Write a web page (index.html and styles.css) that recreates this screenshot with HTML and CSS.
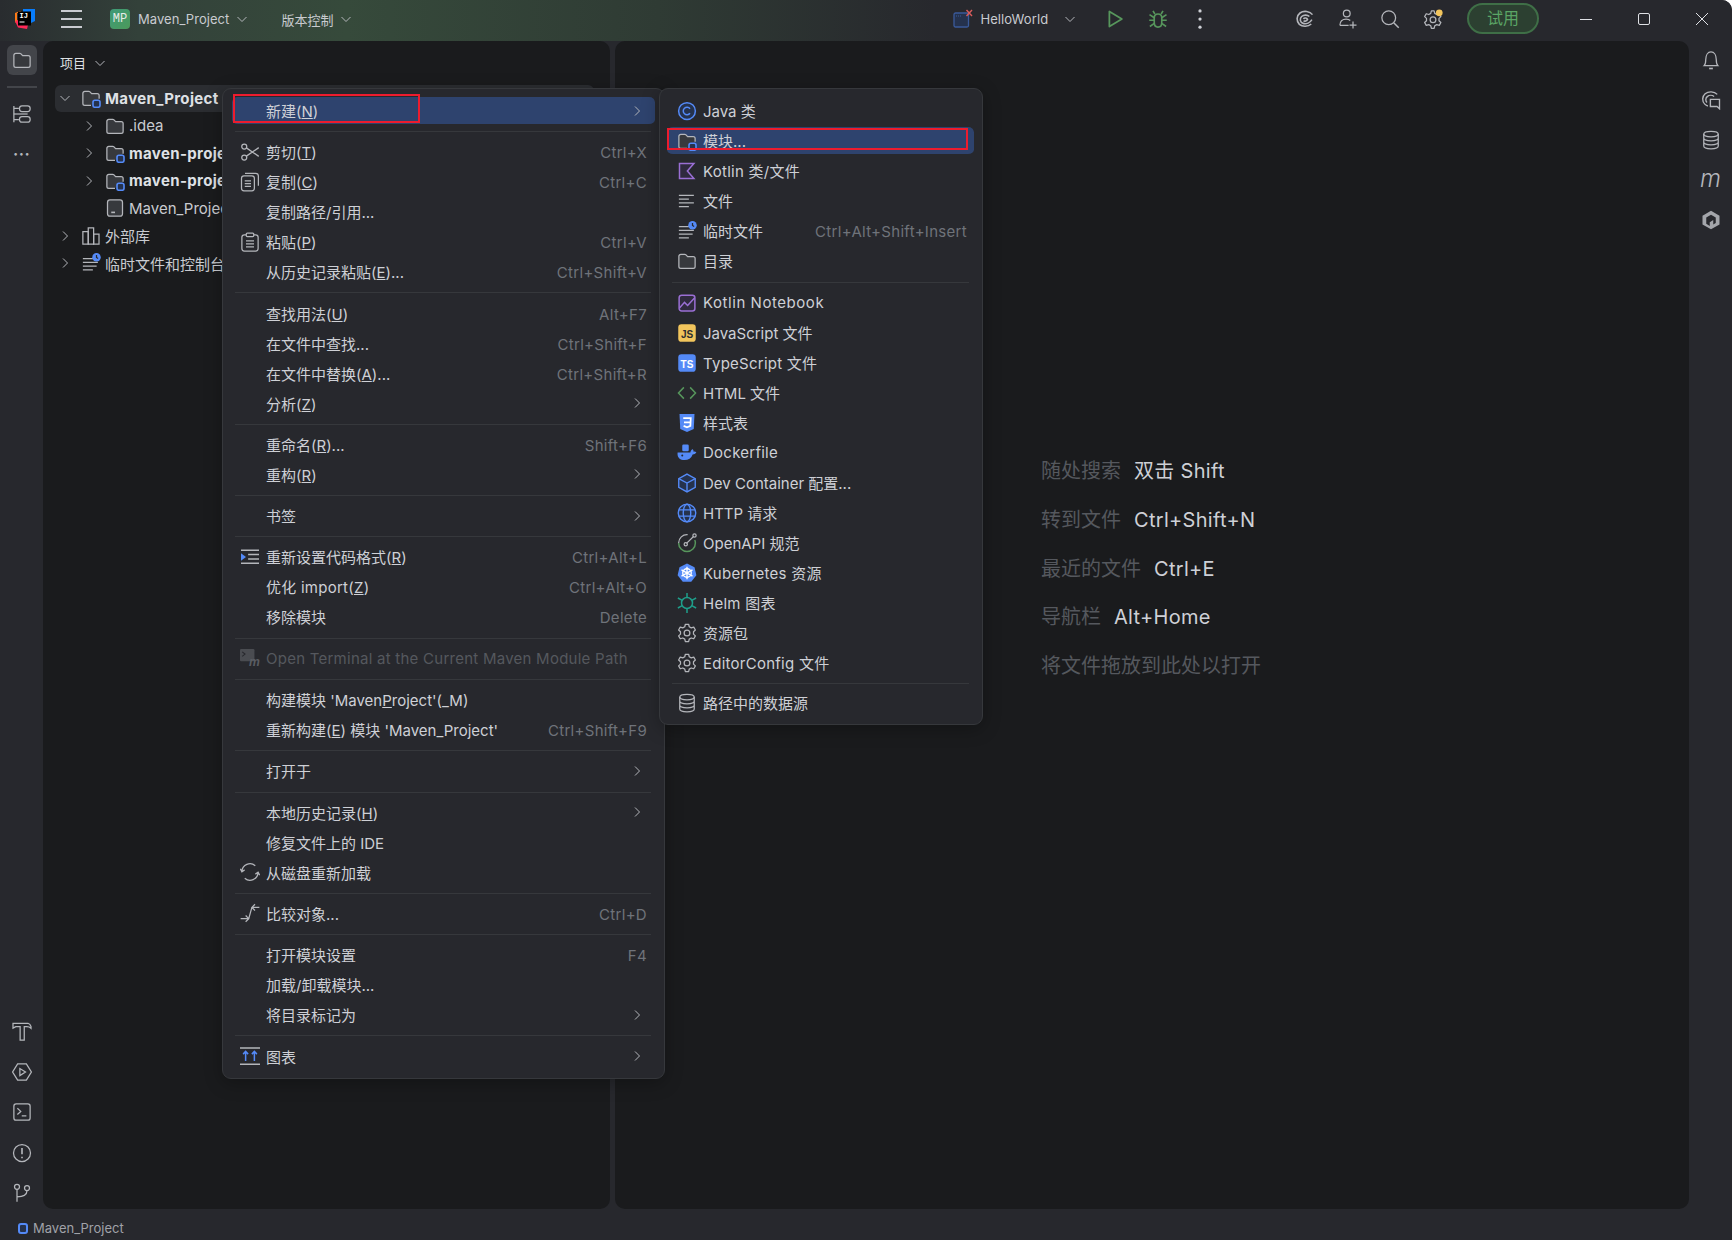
FILE: index.html
```html
<!DOCTYPE html>
<html lang="zh-CN">
<head>
    <meta charset="UTF-8">
    <title>Maven_Project - IntelliJ IDEA</title>
    <link rel="stylesheet" href="styles.css">
</head>
<body>
    <!-- icon sprite -->
    <svg class="sprite" xmlns="http://www.w3.org/2000/svg">
        <symbol id="i-folder" viewBox="0 0 16 16"><path fill="#37393d" d="M1.5 4.2c0-.8.7-1.5 1.5-1.5h3.2c.4 0 .7.1 1 .4l1.3 1.4H13c.8 0 1.5.7 1.5 1.5v6.3c0 .8-.7 1.5-1.5 1.5H3c-.8 0-1.500-.7-1.500-1.500z"/></symbol>
        <symbol id="i-module" viewBox="0 0 16 16"><path fill="#37393d" d="M8 13.8H3c-.8 0-1.5-.7-1.5-1.5V4.2c0-.8.7-1.5 1.5-1.5h3.2c.4 0 .7.1 1 .4l1.3 1.4H13c.8 0 1.5.7 1.5 1.5v2.5"/><rect x="9.6" y="9.8" width="5.6" height="5.6" rx="1.5" fill="#25324d" stroke="#548af7" stroke-width="1.3"/></symbol>
        <symbol id="i-class" viewBox="0 0 16 16"><circle cx="8" cy="8" r="6.7" fill="#25324d" stroke="#548af7" stroke-width="1.2"/><path stroke="#548af7" stroke-width="1.2" d="M10.4 6.2a3 3 0 1 0 0 3.6"/></symbol>
        <symbol id="i-kotlin" viewBox="0 0 16 16"><path fill="#2f2a3e" stroke="#9a6fd4" stroke-width="1.2" d="M2 2h11.5L8.3 8l5.2 6H2z"/></symbol>
        <symbol id="i-lines" viewBox="0 0 16 16"><path d="M1.5 3.5h12M1.5 6.5h8M1.5 9.5h12M1.5 12.5h8"/></symbol>
        <symbol id="i-scratch" viewBox="0 0 16 16"><path d="M1.5 4.5h8M1.5 7.5h12M1.5 10.5h11M1.5 13.5h8"/><circle cx="12.4" cy="3.4" r="3.4" fill="#548af7" stroke="none"/><path stroke="#27282d" d="M12.4 1.6v2l1.3.8"/></symbol>
        <symbol id="i-notebook" viewBox="0 0 16 16"><rect x="1.7" y="1.7" width="12.6" height="12.6" rx="2" fill="#2f2a3e" stroke="#9a6fd4" stroke-width="1.2"/><path stroke="#9a6fd4" stroke-width="1.2" d="M2 12 6 7.5l2.5 2.5L14 4"/></symbol>
        <symbol id="i-js" viewBox="0 0 16 16"><rect x="1" y="1" width="14" height="14" rx="2.5" fill="#f2c55c" stroke="none"/><text class="badge-text" x="8" y="12" fill="#2b2d30">JS</text></symbol>
        <symbol id="i-ts" viewBox="0 0 16 16"><rect x="1" y="1" width="14" height="14" rx="2.5" fill="#548af7" stroke="none"/><text class="badge-text" x="8" y="12" fill="#fff">TS</text></symbol>
        <symbol id="i-css" viewBox="0 0 16 16"><path fill="#548af7" stroke="none" d="M2 .8h12l-.6 12L8 15.2l-5.4-2.4z"/><path stroke="#fff" stroke-width="1.4" d="M5 4h6l-.3 6.3L8 11.4l-2.7-1.1M5.6 7.4h5"/></symbol>
        <symbol id="i-html" viewBox="0 0 16 16"><path stroke="#57965c" stroke-width="1.2" d="M5.5 3.5 1.2 8l4.3 4.5M10.5 3.5 14.8 8l-4.3 4.5"/></symbol>
        <symbol id="i-docker" viewBox="0 0 16 16"><rect x="4.2" y="1.2" width="5.2" height="5.4" rx="1" fill="#548af7" stroke="none"/><path fill="#548af7" stroke="none" d="M.5 7.6h10.2c.2-1.5 1-2.5 2-2.7.4.7.6 1.4.5 2 .8-.2 1.7 0 2.3.5-.7 1.2-1.8 1.7-3 1.7-1 3-3.4 4.5-6.5 4.5-3.4 0-5.6-2-5.6-5.1z"/><circle cx="4.2" cy="10" r=".8" fill="#27282d" stroke="none"/></symbol>
        <symbol id="i-cube" viewBox="0 0 16 16"><path fill="#25324d" stroke="#548af7" stroke-width="1.1" d="M8 .9 14.6 4.5v7L8 15.1 1.4 11.5v-7z"/><path stroke="#548af7" stroke-width="1.1" d="M1.4 4.5 8 8l6.6-3.5M8 8v7"/></symbol>
        <symbol id="i-globe" viewBox="0 0 16 16"><g stroke="#548af7" stroke-width="1.1"><circle cx="8" cy="8" r="7" fill="#25324d"/><ellipse cx="8" cy="8" rx="3" ry="7"/><path d="M1.5 5.5h13M1.5 10.5h13"/></g></symbol>
        <symbol id="i-openapi" viewBox="0 0 16 16"><path stroke="#b4b6bb" d="M8.5 1.3A6.7 6.7 0 0 0 1.3 8"/><path stroke="#57965c" stroke-width="1.2" d="M1.3 8a6.7 6.7 0 0 0 13.4 0c0-.9-.2-1.7-.5-2.4"/><path d="M7.6 8.3 13.2 2.8"/><circle cx="7" cy="9" r="1.3"/><circle cx="14" cy="2" r="1.3"/></symbol>
        <symbol id="i-k8s" viewBox="0 0 16 16"><path fill="#548af7" stroke="none" d="M8 .4 14 3.3l1.5 6.4-4.1 5.2H4.6L.5 9.7 2 3.3z"/><g stroke="#fff" stroke-width="1.1"><circle cx="8" cy="8" r="3.4"/><path d="M8 3v10M3.6 5.5l8.8 5M12.4 5.5l-8.8 5"/></g></symbol>
        <symbol id="i-helm" viewBox="0 0 16 16"><g stroke="#1f9e8a" stroke-width="1.2"><circle cx="8" cy="8" r="4.4"/><path d="M8 0v3.6M8 12.4V16M.7 4l3.5 1.9M11.8 10.1 15.3 12M15.3 4l-3.5 1.9M4.2 10.1.7 12"/></g></symbol>
        <symbol id="i-gear" viewBox="0 0 16 16"><path stroke-linejoin="round" d="M6.7 1h2.6l.5 2 1.6.9 2-.6 1.3 2.3-1.5 1.4v1.9l1.5 1.4-1.3 2.3-2-.6-1.6.9-.5 2H6.7l-.5-2-1.6-.9-2 .6-1.3-2.3 1.5-1.4V7l-1.5-1.4 1.3-2.3 2 .6 1.6-.9z"/><circle cx="8" cy="8" r="2.3"/></symbol>
        <symbol id="i-db" viewBox="0 0 16 16"><ellipse cx="8" cy="3.2" rx="5.8" ry="2.2"/><path d="M2.2 3.2v9.6c0 1.2 2.6 2.2 5.8 2.2s5.8-1 5.8-2.2V3.2M2.2 6.4c0 1.2 2.6 2.2 5.8 2.2s5.8-1 5.8-2.2M2.2 9.6c0 1.2 2.6 2.2 5.8 2.2s5.8-1 5.8-2.2"/></symbol>
        <symbol id="i-scissors" viewBox="0 0 16 16"><circle cx="3.4" cy="3.6" r="2"/><circle cx="3.4" cy="12.4" r="2"/><path d="M5.1 4.7 15 11.5M5.1 11.3 15 4.5"/></symbol>
        <symbol id="i-copy" viewBox="0 0 16 16"><rect x="1.2" y="3" width="10.3" height="12" rx="2"/><path d="M4 1h8.5c1.2 0 2.2 1 2.2 2.2V11M3.8 7h5M3.8 9.2h5M3.8 11.4h5"/></symbol>
        <symbol id="i-paste" viewBox="0 0 16 16"><rect x="1.5" y="2.2" width="13" height="13" rx="2"/><rect x="5" y=".8" width="6" height="2.8" rx=".8" fill="#27282d"/><path d="M4.8 7h6.4M4.8 9.4h6.4M4.8 11.8h6.4"/></symbol>
        <symbol id="i-reformat" viewBox="0 0 16 16"><path stroke-width="1.2" d="M.8 2.5h14.4M6.5 6h8.7M6.5 9.5h8.7M.8 13h14.4"/><path fill="#548af7" stroke="none" d="M.8 5 4.8 8l-4 3z"/></symbol>
        <symbol id="i-termm" viewBox="0 0 18 18"><rect x="0" y="1" width="13" height="11" rx="1" fill="#4a4c51" stroke="none"/><path stroke="#27282d" d="M2 3.5 4.5 5.5 2 7.5"/><text class="termm-text" x="8" y="16">m</text></symbol>
        <symbol id="i-reload" viewBox="0 0 16 16"><path d="M1.5 7.5A6.5 6.5 0 0 1 12.2 3M14.5 8.5A6.5 6.5 0 0 1 3.8 13M.2 5.4l1.3 2.4 2.2-1.5M15.8 10.6l-1.3-2.400-2.200 1.500"/></symbol>
        <symbol id="i-compare" viewBox="0 0 16 16"><path d="M15.5 3.5H9.5M12 1 9.5 3.5 12 6M9.5 3.500 7 12.500M.5 12.5H7M4.500 10 7 12.500 4.500 15"/></symbol>
        <symbol id="i-diagram" viewBox="0 0 16 16"><path stroke-width="1.2" d="M0 1.5h16M0 14.5h16"/><path stroke="#548af7" stroke-width="1.2" d="M4.5 12V4.5M2.5 6.5l2-2.2 2 2.2M11.5 12V4.5M9.5 6.5l2-2.2 2 2.2"/></symbol>
        <symbol id="i-chev-right" viewBox="0 0 16 16"><path d="M6 3.5 10.5 8 6 12.5"/></symbol>
        <symbol id="i-chev-down" viewBox="0 0 16 16"><path d="M3.5 6 8 10.5 12.5 6"/></symbol>
        <symbol id="i-libs" viewBox="0 0 16 16"><rect x="1.5" y="4.5" width="4.3" height="10"/><rect x="5.8" y="1.5" width="4.3" height="13"/><rect x="10.1" y="6.5" width="4.3" height="8"/></symbol>
        <symbol id="i-iml" viewBox="0 0 16 16"><rect x="2" y="1.5" width="12" height="13" rx="2" fill="#37393d"/><path stroke-width="1.3" d="M5 11.5h3"/></symbol>
        <symbol id="i-structure" viewBox="0 0 16 16"><path d="M1.5 1.5v13M1.5 3.5h4M1.5 12.5h4"/><rect x="6" y="1.5" width="8.5" height="4.5" rx="2"/><rect x="6" y="10" width="8.5" height="4.5" rx="2"/><path d="M1.5 8h11"/></symbol>
        <symbol id="i-hammer" viewBox="0 0 16 16"><path d="M.8 1.8h12c1.2.3 2 1.2 2.4 2.6v1.4c-1-1-2-1.300-3.400-1.300H9.800v10.700H6.500V4.500H3l-2.200 1.200z"/></symbol>
        <symbol id="i-runhex" viewBox="0 0 16 16"><path d="M4.5 1.5h7L15.5 8l-4 6.500h-7L.5 8z"/><path d="M6.3 5.2v5.600L10.800 8z"/></symbol>
        <symbol id="i-terminal" viewBox="0 0 16 16"><rect x="1.5" y="1.5" width="13" height="13" rx="1.8"/><path d="M4.3 5l2.700 2.500-2.700 2.500M7.800 11h3.700"/></symbol>
        <symbol id="i-problems" viewBox="0 0 16 16"><circle cx="8" cy="8" r="6.8"/><path stroke-width="1.3" d="M8 4v5M8 11v1.200"/></symbol>
        <symbol id="i-git" viewBox="0 0 16 16"><circle cx="4" cy="3" r="2"/><circle cx="12" cy="4" r="2"/><path d="M4 5v10M4 11c5 0 8-1 8-5"/></symbol>
        <symbol id="i-bell" viewBox="0 0 16 16"><path d="M2.5 12.5c1-1 1.300-2.500 1.300-5C3.800 4 5.500 1.500 8 1.500s4.200 2.500 4.200 6c0 2.500.3 4 1.300 5z"/><path stroke-width="1.3" d="M6.500 14.800h3"/></symbol>
        <symbol id="i-chat" viewBox="0 0 16 16"><path stroke-width="1.1" d="M13 3.500C10.500 1 6 .8 3.300 3 .8 5.200.7 9 3 11.300c.7.700 1.500 1.200 2.500 1.500M10.500 5.200C9 4 6.500 4 5 5.300 3.500 6.600 3.500 8.800 4.800 10"/><path stroke-width="1.1" d="M7.500 7.500h7.300v7.500l-2-1.800H7.500z"/></symbol>
        <symbol id="i-box" viewBox="0 0 16 16"><path fill="#a4a6ab" stroke="none" d="M8 .6 14.800 4.500v7L8 15.400 1.200 11.500v-7z"/><path fill="#27282d" stroke="none" d="M4.200 6 8 3.800 11.800 6v4.300L9.800 11.500V8L7 9.700v3L4.200 11z"/></symbol>
        <symbol id="i-run" viewBox="0 0 16 16"><path stroke="#57965c" stroke-width="1.4" stroke-linejoin="round" d="M3.500 2v12L13.500 8z"/></symbol>
        <symbol id="i-bug" viewBox="0 0 16 16"><g stroke="#57965c" stroke-width="1.3"><path d="M5 7c0-2 1.200-3 3-3s3 1 3 3v4c0 2-1.200 3.500-3 3.500S5 13 5 11z"/><path d="M5.500 4 4 1.500M10.500 4 12 1.500M1.200 4.500 5 7M14.800 4.500 11 7M1 9h4M15 9h-4M1.500 14 5 11.500M14.500 14 11 11.500"/></g></symbol>
        <symbol id="i-dots" viewBox="0 0 16 16"><g fill="#ced0d6" stroke="none"><circle cx="8" cy="1.5" r="1.3"/><circle cx="8" cy="8" r="1.3"/><circle cx="8" cy="14.5" r="1.3"/></g></symbol>
        <symbol id="i-spiral" viewBox="0 0 16 16"><path stroke-width="1.3" d="M14 4.500C12 1.800 7 1 4 3.200 1 5.500 1 9.800 3.500 12.300 6 14.500 10.500 14.300 13 12M11.500 6C10 4.500 7 4.500 5.300 6 3.500 7.800 4 10.800 6.500 11.500 9 12.300 12 11 13.500 8.500M6.800 9.500C7.800 10 9.500 9.500 10 8.300 9.500 7 7.500 6.700 6.800 8"/></symbol>
        <symbol id="i-person" viewBox="0 0 16 16"><circle cx="7" cy="3.5" r="2.7"/><path d="M1.500 13c0-3 2-5 5-5 1.500 0 2.600.5 3.300 1.200M1.500 13h7M12 10v5.500M9.200 12.800h5.600"/></symbol>
        <symbol id="i-search" viewBox="0 0 16 16"><circle cx="7" cy="7" r="5.5"/><path stroke-width="1.2" d="M11 11l4 4"/></symbol>
        <symbol id="i-settings" viewBox="0 0 16 16"><path stroke-linejoin="round" d="M6.700 1.500h2.200l.5 2 1.600.9 2-.6 1.300 2.300-1.500 1.400v1.900l1.500 1.400-1.300 2.300-2-.6-1.600.9-.5 2H6.700l-.5-2-1.600-.9-2 .6-1.300-2.300 1.500-1.400V7.500L1.300 6.100l1.300-2.300 2 .6 1.600-.9z"/><circle cx="8" cy="8.500" r="2.300"/><circle cx="13" cy="3" r="2.700" fill="#f2c55c" stroke="none"/></symbol>
        <symbol id="i-config" viewBox="0 0 20 20"><rect x="1" y="4" width="14.500" height="14" rx="1.500" fill="#25324d" stroke="#3a5a9a" stroke-width="1.3"/><path stroke="#3a5a9a" d="M3 7h1M5 7h1M7 7h1"/><path stroke="#db5c5c" stroke-width="1.4" d="M13.500 1l5.500 6M19 1l-5.500 6"/></symbol>
        <symbol id="i-logo" viewBox="0 0 20 20"><path fill="#087cfa" d="M8 0h12v12l-4 2V4H8z"/><path fill="#fe7a16" d="M0 4 5 2l3 2H2v8l-2 2z"/><path fill="#fe2857" d="M0 12l3-1 1 5h9l-1 4-9-1.500z"/><rect x="3" y="2.500" width="13" height="14" fill="#000"/><text class="logo-text" x="4.500" y="9">IJ</text><rect x="4.500" y="12.500" width="5" height="1" fill="#fff"/></symbol>
    </svg>

    <div class="ide">
        <div class="titlebar">
            <svg class="logo"><use href="#i-logo"/></svg>
            <div class="hamburger"><i></i><i></i><i></i></div>
            <div class="project-badge">MP</div>
            <span class="tb-text tb-project">Maven_Project</span>
            <svg class="ic-sm tb-chev"><use href="#i-chev-down"/></svg>
            <span class="tb-text tb-vcs">版本控制</span>
            <svg class="ic-sm tb-chev"><use href="#i-chev-down"/></svg>
            <div class="tb-spacer"></div>
            <svg class="ic"><use href="#i-config"/></svg>
            <span class="tb-text tb-config">HelloWorld</span>
            <svg class="ic-sm tb-config-chev"><use href="#i-chev-down"/></svg>
            <div class="tb-group tb-run">
                <svg class="ic"><use href="#i-run"/></svg>
                <svg class="ic"><use href="#i-bug"/></svg>
                <svg class="ic"><use href="#i-dots"/></svg>
            </div>
            <div class="tb-group tb-tools">
                <svg class="ic"><use href="#i-spiral"/></svg>
                <svg class="ic"><use href="#i-person"/></svg>
                <svg class="ic"><use href="#i-search"/></svg>
                <svg class="ic"><use href="#i-settings"/></svg>
            </div>
            <div class="trial">试用</div>
            <div class="tb-group tb-window">
                <div class="win-btn"><i class="win-min"></i></div>
                <div class="win-btn"><i class="win-max"></i></div>
                <div class="win-btn win-close">
                    <svg class="ic"><path d="M4 4l12 12M16 4 4 16"/></svg>
                </div>
            </div>
        </div>

        <div class="main">
            <div class="stripe stripe-left">
                <div class="stripe-top">
                    <div class="stripe-btn active"><svg class="ic"><use href="#i-folder"/></svg></div>
                    <div class="stripe-sep"></div>
                    <div class="stripe-btn"><svg class="ic"><use href="#i-structure"/></svg></div>
                    <div class="stripe-more">···</div>
                </div>
                <div class="stripe-bottom">
                    <svg class="ic"><use href="#i-hammer"/></svg>
                    <svg class="ic"><use href="#i-runhex"/></svg>
                    <svg class="ic"><use href="#i-terminal"/></svg>
                    <svg class="ic"><use href="#i-problems"/></svg>
                    <svg class="ic"><use href="#i-git"/></svg>
                </div>
            </div>

            <div class="panel project-panel">
                <div class="panel-head">
                    <span>项目</span>
                    <svg class="ic-sm"><use href="#i-chev-down"/></svg>
                </div>
                <div class="tree">
                    <div class="tree-row selected">
                        <svg class="ic-sm"><use href="#i-chev-down"/></svg>
                        <svg class="ic tree-icon"><use href="#i-module"/></svg>
                        <b>Maven_Project</b>
                    </div>
                    <div class="tree-row lv1">
                        <svg class="ic-sm"><use href="#i-chev-right"/></svg>
                        <svg class="ic tree-icon"><use href="#i-folder"/></svg>
                        <span>.idea</span>
                    </div>
                    <div class="tree-row lv1">
                        <svg class="ic-sm"><use href="#i-chev-right"/></svg>
                        <svg class="ic tree-icon"><use href="#i-module"/></svg>
                        <b>maven-project-a</b>
                    </div>
                    <div class="tree-row lv1">
                        <svg class="ic-sm"><use href="#i-chev-right"/></svg>
                        <svg class="ic tree-icon"><use href="#i-module"/></svg>
                        <b>maven-project-b</b>
                    </div>
                    <div class="tree-row lv1">
                        <i class="ic-sm"></i>
                        <svg class="ic tree-icon"><use href="#i-iml"/></svg>
                        <span>Maven_Project.iml</span>
                    </div>
                    <div class="tree-row">
                        <svg class="ic-sm"><use href="#i-chev-right"/></svg>
                        <svg class="ic tree-icon"><use href="#i-libs"/></svg>
                        <span>外部库</span>
                    </div>
                    <div class="tree-row">
                        <svg class="ic-sm"><use href="#i-chev-right"/></svg>
                        <svg class="ic tree-icon"><use href="#i-scratch"/></svg>
                        <span>临时文件和控制台</span>
                    </div>
                </div>
            </div>

            <div class="panel editor-panel">
                <p class="hint"><span>随处搜索</span><b>双击 Shift</b></p>
                <p class="hint"><span>转到文件</span><b>Ctrl+Shift+N</b></p>
                <p class="hint"><span>最近的文件</span><b>Ctrl+E</b></p>
                <p class="hint"><span>导航栏</span><b>Alt+Home</b></p>
                <p class="hint"><span>将文件拖放到此处以打开</span></p>
            </div>

            <div class="stripe stripe-right">
                <svg class="ic"><use href="#i-bell"/></svg>
                <svg class="ic"><use href="#i-chat"/></svg>
                <svg class="ic"><use href="#i-db"/></svg>
                <span class="maven-m">m</span>
                <svg class="ic"><use href="#i-box"/></svg>
            </div>
        </div>

        <div class="statusbar">
            <i class="status-square"></i>
            <span>Maven_Project</span>
        </div>
    </div>

    <!-- context menu -->
    <div class="menu menu-main">
        <div class="row active"><span class="icon"></span><span class="label">新建(<u>N</u>)</span><svg class="arrow"><use href="#i-chev-right"/></svg></div>
        <div class="sep"></div>
        <div class="row"><svg class="ic icon"><use href="#i-scissors"/></svg><span class="label">剪切(<u>T</u>)</span><span class="key">Ctrl+X</span></div>
        <div class="row"><svg class="ic icon"><use href="#i-copy"/></svg><span class="label">复制(<u>C</u>)</span><span class="key">Ctrl+C</span></div>
        <div class="row"><span class="icon"></span><span class="label">复制路径/引用...</span></div>
        <div class="row"><svg class="ic icon"><use href="#i-paste"/></svg><span class="label">粘贴(<u>P</u>)</span><span class="key">Ctrl+V</span></div>
        <div class="row"><span class="icon"></span><span class="label">从历史记录粘贴(<u>E</u>)...</span><span class="key">Ctrl+Shift+V</span></div>
        <div class="sep"></div>
        <div class="row"><span class="icon"></span><span class="label">查找用法(<u>U</u>)</span><span class="key">Alt+F7</span></div>
        <div class="row"><span class="icon"></span><span class="label">在文件中查找...</span><span class="key">Ctrl+Shift+F</span></div>
        <div class="row"><span class="icon"></span><span class="label">在文件中替换(<u>A</u>)...</span><span class="key">Ctrl+Shift+R</span></div>
        <div class="row"><span class="icon"></span><span class="label">分析(<u>Z</u>)</span><svg class="arrow"><use href="#i-chev-right"/></svg></div>
        <div class="sep"></div>
        <div class="row"><span class="icon"></span><span class="label">重命名(<u>R</u>)...</span><span class="key">Shift+F6</span></div>
        <div class="row"><span class="icon"></span><span class="label">重构(<u>R</u>)</span><svg class="arrow"><use href="#i-chev-right"/></svg></div>
        <div class="sep"></div>
        <div class="row"><span class="icon"></span><span class="label">书签</span><svg class="arrow"><use href="#i-chev-right"/></svg></div>
        <div class="sep"></div>
        <div class="row"><svg class="ic icon"><use href="#i-reformat"/></svg><span class="label">重新设置代码格式(<u>R</u>)</span><span class="key">Ctrl+Alt+L</span></div>
        <div class="row"><span class="icon"></span><span class="label wide">优化 import(<u>Z</u>)</span><span class="key">Ctrl+Alt+O</span></div>
        <div class="row"><span class="icon"></span><span class="label">移除模块</span><span class="key">Delete</span></div>
        <div class="sep"></div>
        <div class="row disabled"><svg class="ic icon"><use href="#i-termm"/></svg><span class="label wide">Open Terminal at the Current Maven Module Path</span></div>
        <div class="sep"></div>
        <div class="row"><span class="icon"></span><span class="label">构建模块 'Maven<u>P</u>roject'(_M)</span></div>
        <div class="row"><span class="icon"></span><span class="label">重新构建(<u>E</u>) 模块 'Maven_Project'</span><span class="key">Ctrl+Shift+F9</span></div>
        <div class="sep"></div>
        <div class="row"><span class="icon"></span><span class="label">打开于</span><svg class="arrow"><use href="#i-chev-right"/></svg></div>
        <div class="sep"></div>
        <div class="row"><span class="icon"></span><span class="label">本地历史记录(<u>H</u>)</span><svg class="arrow"><use href="#i-chev-right"/></svg></div>
        <div class="row"><span class="icon"></span><span class="label">修复文件上的 IDE</span></div>
        <div class="row"><svg class="ic icon"><use href="#i-reload"/></svg><span class="label">从磁盘重新加载</span></div>
        <div class="sep"></div>
        <div class="row"><svg class="ic icon"><use href="#i-compare"/></svg><span class="label">比较对象...</span><span class="key">Ctrl+D</span></div>
        <div class="sep"></div>
        <div class="row"><span class="icon"></span><span class="label">打开模块设置</span><span class="key">F4</span></div>
        <div class="row"><span class="icon"></span><span class="label">加载/卸载模块...</span></div>
        <div class="row"><span class="icon"></span><span class="label">将目录标记为</span><svg class="arrow"><use href="#i-chev-right"/></svg></div>
        <div class="sep"></div>
        <div class="row"><svg class="ic icon"><use href="#i-diagram"/></svg><span class="label">图表</span><svg class="arrow"><use href="#i-chev-right"/></svg></div>
    </div>

    <!-- submenu -->
    <div class="menu menu-sub">
        <div class="row"><svg class="ic icon"><use href="#i-class"/></svg><span class="label">Java 类</span></div>
        <div class="row active"><svg class="ic icon"><use href="#i-module"/></svg><span class="label">模块...</span></div>
        <div class="row"><svg class="ic icon"><use href="#i-kotlin"/></svg><span class="label wide">Kotlin 类/文件</span></div>
        <div class="row"><svg class="ic icon"><use href="#i-lines"/></svg><span class="label">文件</span></div>
        <div class="row"><svg class="ic icon"><use href="#i-scratch"/></svg><span class="label">临时文件</span><span class="key">Ctrl+Alt+Shift+Insert</span></div>
        <div class="row"><svg class="ic icon"><use href="#i-folder"/></svg><span class="label">目录</span></div>
        <div class="sep"></div>
        <div class="row"><svg class="ic icon"><use href="#i-notebook"/></svg><span class="label wider">Kotlin Notebook</span></div>
        <div class="row"><svg class="ic icon"><use href="#i-js"/></svg><span class="label">JavaScript 文件</span></div>
        <div class="row"><svg class="ic icon"><use href="#i-ts"/></svg><span class="label wide">TypeScript 文件</span></div>
        <div class="row"><svg class="ic icon"><use href="#i-html"/></svg><span class="label">HTML 文件</span></div>
        <div class="row"><svg class="ic icon"><use href="#i-css"/></svg><span class="label">样式表</span></div>
        <div class="row"><svg class="ic icon"><use href="#i-docker"/></svg><span class="label wide">Dockerfile</span></div>
        <div class="row"><svg class="ic icon"><use href="#i-cube"/></svg><span class="label">Dev Container 配置...</span></div>
        <div class="row"><svg class="ic icon"><use href="#i-globe"/></svg><span class="label">HTTP 请求</span></div>
        <div class="row"><svg class="ic icon"><use href="#i-openapi"/></svg><span class="label">OpenAPI 规范</span></div>
        <div class="row"><svg class="ic icon"><use href="#i-k8s"/></svg><span class="label wide">Kubernetes 资源</span></div>
        <div class="row"><svg class="ic icon"><use href="#i-helm"/></svg><span class="label wide">Helm 图表</span></div>
        <div class="row"><svg class="ic icon"><use href="#i-gear"/></svg><span class="label">资源包</span></div>
        <div class="row"><svg class="ic icon"><use href="#i-gear"/></svg><span class="label wide">EditorConfig 文件</span></div>
        <div class="sep sep-short"></div>
        <div class="row"><svg class="ic icon"><use href="#i-db"/></svg><span class="label">路径中的数据源</span></div>
    </div>

    <!-- red annotation boxes -->
    <div class="mark mark-new"></div>
    <div class="mark mark-module"></div>
</body>
</html>
```

FILE: styles.css
```css
* {
    box-sizing: border-box;
}
body {
    margin: 0;
    width: 1732px;
    height: 1240px;
    overflow: hidden;
    position: relative;
    background-color: #fff;
    color: #ced0d6;
    font-family: Inter, "Noto Sans CJK SC", sans-serif;
    font-size: 15px;
}
.sprite {
    display: none;
}
.ic, .ic-sm {
    display: block;
    flex: none;
    fill: none;
    stroke: #b4b6bb;
    stroke-width: 1;
}
.ic {
    width: 20px;
    height: 20px;
}
.ic-sm {
    width: 16px;
    height: 16px;
}
.badge-text {
    font-family: "Liberation Sans", sans-serif;
    font-size: 8px;
    font-weight: bold;
    text-anchor: middle;
    stroke: none;
}
.logo-text {
    font-family: "Liberation Mono", monospace;
    font-size: 7px;
    font-weight: bold;
    fill: #fff;
    stroke: none;
}
.termm-text {
    font-family: "Liberation Sans", sans-serif;
    font-size: 11px;
    font-weight: bold;
    font-style: italic;
    fill: #5a5d63;
    stroke: none;
}

/* layout */
.ide {
    display: flex;
    flex-direction: column;
    height: 100%;
    border-top-right-radius: 10px;
    background-color: #27282d;
}
.main {
    flex: 1;
    display: flex;
    min-height: 0;
}
.panel {
    background-color: #1a1b1d;
    border-radius: 10px;
}

/* title bar */
.titlebar {
    height: 41px;
    display: flex;
    align-items: center;
    padding: 0 20px 3px 15px;
    border-top-right-radius: 10px;
    background: linear-gradient(90deg, #292c2f 0, #33413a 8%, #364a3b 20%, #2f3b34 38%, #27282d 54%);
}
.logo {
    width: 20px;
    height: 20px;
    flex: none;
}
.hamburger {
    width: 21px;
    margin-left: 26px;
    display: flex;
    flex-direction: column;
    gap: 6px;
}
.hamburger i {
    display: block;
    height: 2px;
    background-color: #c9cbd0;
}
.project-badge {
    width: 20px;
    height: 20px;
    margin-left: 28px;
    border-radius: 4px;
    background: linear-gradient(135deg, #3e9a78, #4c9a5a);
    color: #e8ece8;
    font-family: "Liberation Mono", monospace;
    font-size: 12px;
    line-height: 20px;
    text-align: center;
}
.tb-text {
    font-size: 13px;
    color: #c9cbd0;
}
.tb-project {
    margin-left: 8px;
    letter-spacing: 0.05px;
}
.tb-chev {
    margin-left: 5px;
}
.tb-vcs {
    margin-left: 31px;
}
.tb-spacer {
    flex: 1;
}
.tb-config {
    margin-left: 7px;
    letter-spacing: 0.1px;
}
.tb-config-chev {
    margin-left: 14px;
}
.tb-group {
    display: flex;
    align-items: center;
}
.tb-run {
    gap: 22.5px;
    margin-left: 27px;
}
.tb-tools {
    gap: 22.6px;
    margin-left: 85px;
}
.tb-window {
    gap: 38px;
    margin-left: 37px;
}
.trial {
    width: 72px;
    height: 31px;
    margin: 0 0 2px 24px;
    border: 2px solid #3f6f47;
    border-radius: 16px;
    background-color: #2c4031;
    color: #5ba565;
    font-size: 16px;
    line-height: 27px;
    text-align: center;
}
.win-btn {
    width: 20px;
    height: 20px;
    display: flex;
    align-items: center;
    justify-content: center;
}
.win-min {
    width: 12px;
    height: 1px;
    background-color: #dfe1e5;
}
.win-max {
    width: 12px;
    height: 12px;
    border: 1px solid #dfe1e5;
    border-radius: 2px;
}
.win-close .ic {
    stroke: #dfe1e5;
}

/* tool window stripes */
.stripe {
    width: 43px;
    flex: none;
    display: flex;
    flex-direction: column;
    align-items: center;
}
.stripe-left {
    justify-content: space-between;
    padding: 4px 0 6px;
}
.stripe-top {
    display: flex;
    flex-direction: column;
    align-items: center;
}
.stripe-btn {
    width: 30px;
    height: 30px;
    display: flex;
    align-items: center;
    justify-content: center;
    border-radius: 6px;
}
.stripe-btn.active {
    background-color: #43454a;
}
.stripe-sep {
    width: 30px;
    height: 2px;
    margin: 11px 0 11px;
    background-color: #43454a;
}
.stripe-more {
    margin-top: 14px;
    font-size: 20px;
    line-height: 22px;
    color: #b4b6bb;
}
.stripe-bottom {
    display: flex;
    flex-direction: column;
    gap: 20.4px;
}
.stripe-right {
    padding-top: 9px;
    gap: 20px;
}
.maven-m {
    height: 20px;
    font-size: 24px;
    font-style: italic;
    font-weight: 300;
    line-height: 17px;
    color: #b4b6bb;
}

/* project panel */
.project-panel {
    width: 567px;
    flex: none;
    margin-right: 5px;
    padding: 0 16px 0 12px;
}
.panel-head {
    height: 43.5px;
    padding-left: 5px;
    display: flex;
    align-items: center;
    gap: 6px;
    font-size: 13px;
    color: #dfe1e5;
}
.tree-row {
    height: 27.5px;
    padding-left: 2px;
    display: flex;
    align-items: center;
    white-space: nowrap;
    color: #c9cbd0;
}
.tree-row b {
    font-weight: 700;
    letter-spacing: 0.35px;
    color: #dfe1e5;
}
.tree-row.selected {
    border-radius: 6px;
    background-color: #2b2d31;
}
.tree-row.lv1 {
    padding-left: 26px;
}
.tree-icon {
    margin: 0 4px 0 8px;
}

/* editor hints */
.editor-panel {
    flex: 1;
    padding: 415px 0 0 426px;
}
.hint {
    height: 30px;
    margin: 0 0 18.75px;
    display: flex;
    gap: 13px;
    font-size: 20px;
    line-height: 30px;
    color: #55585e;
}
.hint b {
    font-weight: 400;
    letter-spacing: 0.3px;
    color: #ced0d6;
}

/* status bar */
.statusbar {
    height: 31px;
    padding: 7px 0 0 18px;
    display: flex;
    align-items: center;
    gap: 5px;
    font-size: 13px;
    color: #a0a2a8;
}
.status-square {
    width: 10px;
    height: 11px;
    border: 2px solid #548af7;
    border-radius: 3px;
    background-color: #25324d;
}

/* popup menus */
.menu {
    position: absolute;
    top: 88px;
    padding: 7px 0 6px;
    background-color: #27282d;
    border: 1px solid #36383c;
    border-radius: 9px;
    box-shadow: 0 4px 18px rgba(0, 0, 0, 0.28);
}
.menu-main {
    left: 222px;
    width: 443px;
}
.menu-sub {
    left: 659px;
    width: 324px;
    height: 637px;
}
.row {
    height: 30px;
    margin: 0 9px;
    padding: 0 8px;
    display: flex;
    align-items: center;
    border-top: 1px solid transparent;
    border-bottom: 2px solid transparent;
    border-radius: 6px;
    background-clip: padding-box;
    color: #ced0d6;
    white-space: nowrap;
}
.menu-sub .row {
    margin: 0 8px 0 7px;
    padding: 0 7px 0 10px;
}
.row.active {
    background-color: #2e436e;
}
.row.disabled .label {
    color: #55585e;
}
.icon {
    width: 20px;
    height: 20px;
    flex: none;
    margin-right: 6px;
}
.label {
    flex: 1;
}
.wide {
    letter-spacing: 0.25px;
}
.wider {
    letter-spacing: 0.55px;
}
.key {
    margin-top: 2px;
    letter-spacing: 0.3px;
    color: #6f737a;
}
.arrow {
    width: 16px;
    height: 16px;
    margin-right: 2px;
    fill: none;
    stroke: #b4b6bb;
}
.sep {
    height: 11.3px;
    margin: 0 13px 0 12px;
    display: flex;
    align-items: center;
}
.menu-sub .sep {
    height: 12px;
}
.menu-sub .sep-short {
    height: 10px;
}
.sep::after {
    content: "";
    flex: 1;
    height: 1px;
    background-color: #36383c;
}

/* annotations drawn on top of the screenshot */
.mark {
    position: absolute;
    border: 2px solid #ed1c2e;
}
.mark-new {
    left: 233px;
    top: 94px;
    width: 187px;
    height: 29px;
}
.mark-module {
    left: 667px;
    top: 128px;
    width: 301px;
    height: 22px;
}
```
